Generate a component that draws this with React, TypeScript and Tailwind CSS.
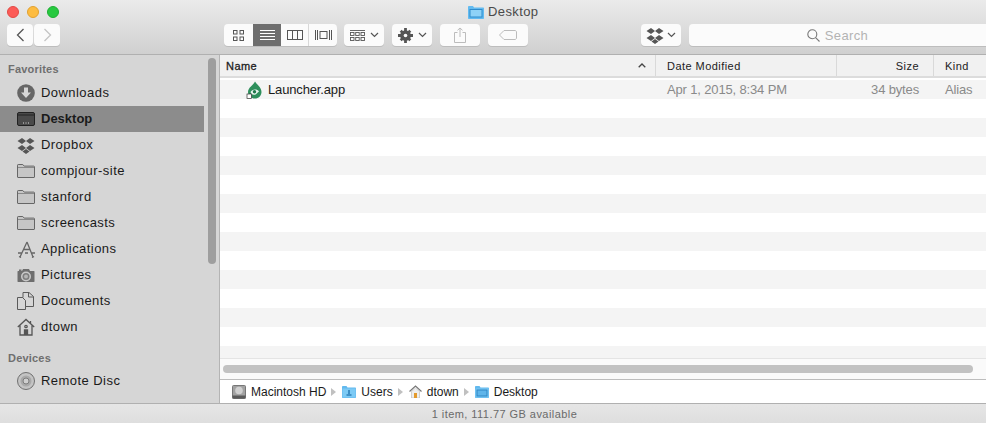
import type { ReactNode } from "react";

const font = "font-['Liberation_Sans',Arial,sans-serif]";

function Chevron() {
  return (
    <svg width="9" height="6" viewBox="0 0 9 6" fill="none" stroke="#555" strokeWidth="1.2">
      <path d="M1 1l3.500 3.500L8 1" />
    </svg>
  );
}

function DropboxIcon({ color = "#555" }: { color?: string }) {
  return (
    <svg width="18" height="17" viewBox="0 0 18 17" fill={color}>
      <path d="M5 1L0.500 4 5 7l4-3zM13 1L9 4l4 3 4.500-3zM5 8L0.500 11 5 14l4-3zM13 8l-4 3 4 3 4.500-3z" />
      <path d="M5.500 14.500L9 12l3.500 2.500L9 17z" />
    </svg>
  );
}

function ToolButton({ className, children }: { className: string; children?: ReactNode }) {
  return (
    <div className={`h-[22px] rounded-[4px] bg-[#fbfbfb] shadow-[0_1px_0_#bdbdbd] flex items-center justify-center ${className}`}>
      {children}
    </div>
  );
}

function FolderIcon() {
  return (
    <svg width="18" height="14" viewBox="0 0 18 14">
      <path d="M0.500 13V1.200C0.500 .8 .8 .5 1.200 .5h4.600l1.400 1.600h9.600c.4 0 .7.3.7.7V13c0 .3-.2.5-.5.5H1c-.3 0-.5-.2-.5-.5z" fill="#c6c6c6" stroke="#666" />
      <path d="M1 3.500h16" stroke="#8a8a8a" />
    </svg>
  );
}

function SideIcon({ name }: { name: string }) {
  if (name === "download") {
    return (
      <svg width="18" height="18" viewBox="0 0 18 18">
        <circle cx="9" cy="9" r="8.800" fill="#666" />
        <path d="M7 3.500h4v5h3L9 14 4 8.500h3z" fill="#d6d6d6" />
      </svg>
    );
  }
  if (name === "desktop") {
    return (
      <svg width="18" height="14" viewBox="0 0 18 14">
        <rect x=".5" y=".5" width="17" height="13" rx="1.500" fill="#4a4a4a" stroke="#222" />
        <path d="M1 3h16" stroke="#222" />
        <path d="M6 11h1M8.500 11h1M11 11h1" stroke="#ddd" />
      </svg>
    );
  }
  if (name === "dropbox") return <DropboxIcon />;
  if (name === "folder") return <FolderIcon />;
  if (name === "apps") {
    return (
      <svg width="19" height="17" viewBox="0 0 19 17" fill="none" stroke="#666" strokeWidth="1.300">
        <path d="M10 1L3 16M10 1l6 15M1 12h4M8 12h3M14 12h4M6.500 8.500h6.500" />
        <path d="M2 15.500l2 1M17 15.500l-2 1" />
      </svg>
    );
  }
  if (name === "camera") {
    return (
      <svg width="18" height="15" viewBox="0 0 18 15">
        <path d="M1 3h1V1.500h2.500V3H5l1-2h6l1 2h4c.3 0 .5.2.5.5v10c0 .3-.2.5-.5.5H1c-.3 0-.5-.2-.5-.5v-10C.5 3.200.7 3 1 3z" fill="#6e6e6e" />
        <circle cx="9" cy="8.500" r="5" fill="#c9c9c9" />
        <circle cx="9" cy="8.500" r="3.500" fill="#7d7d7d" />
        <circle cx="9" cy="8.500" r="2" fill="#b5b5b5" />
      </svg>
    );
  }
  if (name === "docs") {
    return (
      <svg width="17" height="18" viewBox="0 0 17 18" fill="#d6d6d6" stroke="#5a5a5a">
        <path d="M.5 5.500h5l3 3v9h-8z" />
        <path d="M6 .5h6l4.500 4v10h-8V8.500l-3-3H6z" />
        <path d="M11.500 .5v4.500h5" fill="none" />
      </svg>
    );
  }
  if (name === "home") {
    return (
      <svg width="18" height="18" viewBox="0 0 18 18" fill="none" stroke="#555" strokeWidth="1.300">
        <path d="M.8 9L9 1.500 17.200 9M13.500 3v2.500M3 7.500V17h12V7.500" />
        <path d="M7.500 17v-5h3v5" fill="#555" />
        <circle cx="9" cy="8.500" r="1.200" />
      </svg>
    );
  }
  return (
    <svg width="18" height="18" viewBox="0 0 18 18">
      <circle cx="9" cy="9" r="8.500" fill="#c4c4c4" stroke="#707070" />
      <circle cx="9" cy="9" r="5.500" fill="#a9a9a9" />
      <circle cx="9" cy="9" r="3" fill="#cfcfcf" stroke="#7c7c7c" />
    </svg>
  );
}

const favorites = [
  { label: "Downloads", icon: "download" },
  { label: "Desktop", icon: "desktop", selected: true },
  { label: "Dropbox", icon: "dropbox" },
  { label: "compjour-site", icon: "folder" },
  { label: "stanford", icon: "folder" },
  { label: "screencasts", icon: "folder" },
  { label: "Applications", icon: "apps" },
  { label: "Pictures", icon: "camera" },
  { label: "Documents", icon: "docs" },
  { label: "dtown", icon: "home" },
];

function SideRow({ label, icon, selected }: { label: string; icon: string; selected?: boolean }) {
  return (
    <div className={`h-[26px] w-[204px] flex items-center text-[13px] text-[#1a1a1a] ${selected ? "bg-[#8c8c8c] font-bold" : ""}`}>
      <div className="w-[41px] pl-[17px] flex justify-start items-center shrink-0">
        <SideIcon name={icon} />
      </div>
      <span className={selected ? "tracking-[0px]" : "tracking-[0.45px]"}>{label}</span>
    </div>
  );
}

function BlueFolder({ person }: { person?: boolean }) {
  return (
    <svg width="14" height="12" viewBox="0 0 14 12">
      <path d="M0 1c0-.5.4-1 1-1h3.500l1 1.500H13c.6 0 1 .4 1 1V11c0 .6-.4 1-1 1H1c-.6 0-1-.4-1-1z" fill="#62b9ee" />
      <rect x="0.500" y="2.500" width="13" height="9" fill="#7ccaf5" />
      {person ? (
        <path d="M7 4v4M4.500 9h5" stroke="#2c7fb8" strokeWidth="1.600" />
      ) : (
        <rect x="2" y="4" width="10" height="6" fill="#5fb5ea" stroke="#2f86c4" />
      )}
    </svg>
  );
}

function Crumb({ icon, label }: { icon: ReactNode; label: string }) {
  return (
    <div className="flex items-center gap-[5px]">
      {icon}
      <span>{label}</span>
    </div>
  );
}

function Sep() {
  return <span className="w-0 h-0 border-y-[4px] border-y-transparent border-l-[5px] border-l-[#c0c0c0] ml-[5px] mr-[6px]" />;
}

export default function App() {
  return (
    <div className={`w-[986px] h-[423px] flex flex-col overflow-hidden bg-white ${font}`}>
      {/* Toolbar */}
      <div className="h-[55px] shrink-0 bg-gradient-to-b from-[#ebebeb] to-[#d0d0d0] border-b border-[#b0b0b0] flex flex-col">
        <div className="h-[24px] flex items-center">
          <div className="w-[468px] shrink-0 flex items-center gap-[8px] pl-[7px]">
            <span className="w-[12px] h-[12px] rounded-full bg-[#fc5b57] border border-[#e24a45]" />
            <span className="w-[12px] h-[12px] rounded-full bg-[#fdbc40] border border-[#e2a12f]" />
            <span className="w-[12px] h-[12px] rounded-full bg-[#27c940] border border-[#1eae32]" />
          </div>
          <div className="flex items-center gap-[4px] text-[13px] text-[#4a4a4a] tracking-[0.4px]">
            <svg width="16" height="13" viewBox="0 0 16 13">
              <path d="M0 1c0-.5.4-1 1-1h4l1 1.500h9c.6 0 1 .4 1 1V12c0 .6-.4 1-1 1H1c-.6 0-1-.4-1-1z" fill="#63bbf0" />
              <rect x="2" y="3.500" width="12" height="7.500" fill="#8ed2f7" stroke="#2f8ccb" />
            </svg>
            <span>Desktop</span>
          </div>
        </div>
        <div className="flex items-center pl-[7px]">
          <ToolButton className="w-[26px]">
            <svg width="9" height="14" viewBox="0 0 9 14" fill="none" stroke="#555" strokeWidth="1.300"><path d="M7.500 1L1.500 7l6 6" /></svg>
          </ToolButton>
          <ToolButton className="w-[26px] ml-[1px]">
            <svg width="9" height="14" viewBox="0 0 9 14" fill="none" stroke="#c4c4c4" strokeWidth="1.300"><path d="M1.500 1l6 6-6 6" /></svg>
          </ToolButton>

          <div className="ml-[164px] h-[22px] flex rounded-[4px] bg-[#fbfbfb] shadow-[0_1px_0_#bdbdbd] overflow-hidden">
            <div className="w-[29px] flex items-center justify-center">
              <svg width="11" height="11" viewBox="0 0 11 11" fill="none" stroke="#555">
                <rect x=".5" y=".5" width="3.500" height="3.500" /><rect x="7" y=".5" width="3.500" height="3.500" />
                <rect x=".5" y="7" width="3.500" height="3.500" /><rect x="7" y="7" width="3.500" height="3.500" />
              </svg>
            </div>
            <div className="w-[28px] bg-[#6e6e6e] flex items-center justify-center">
              <svg width="15" height="10" viewBox="0 0 15 10" stroke="#fff"><path d="M0 .5h15M0 3.500h15M0 6.500h15M0 9.500h15" /></svg>
            </div>
            <div className="w-[28px] border-r border-[#d8d8d8] flex items-center justify-center">
              <svg width="16" height="10" viewBox="0 0 16 10" fill="none" stroke="#555"><rect x=".5" y=".5" width="15" height="9" /><path d="M5.500 0v10M10.500 0v10" /></svg>
            </div>
            <div className="w-[28px] flex items-center justify-center">
              <svg width="17" height="10" viewBox="0 0 17 10" fill="none" stroke="#555"><rect x="5" y="1.500" width="7" height="7" /><path d="M.5 0v10M2.500 0v10M14.500 0v10M16.500 0v10" /></svg>
            </div>
          </div>

          <ToolButton className="w-[40px] ml-[7px] gap-[5px]">
            <svg width="15" height="11" viewBox="0 0 15 11" fill="none" stroke="#555" strokeWidth=".9">
              <path d="M0 .5h15" /><rect x=".5" y="2.500" width="3.500" height="3" /><rect x="5.700" y="2.500" width="3.500" height="3" /><rect x="11" y="2.500" width="3.500" height="3" />
              <rect x=".5" y="7.500" width="3.500" height="3" /><rect x="5.700" y="7.500" width="3.500" height="3" /><rect x="11" y="7.500" width="3.500" height="3" />
            </svg>
            <Chevron />
          </ToolButton>
          <ToolButton className="w-[40px] ml-[8px] gap-[5px]">
            <svg width="15" height="15" viewBox="0 0 14 14" fill="#555">
              <circle cx="7" cy="7" r="5" />
              <path d="M5.700 0h2.600v3H5.700zM5.700 11h2.600v3H5.700zM0 5.700h3v2.600H0zM11 5.700h3v2.600h-3zM1.600 3.400l1.800-1.800 2 2-1.800 1.800zM8.600 10.400l1.800-1.800 2 2-1.800 1.800zM1.600 10.600l2-2 1.800 1.800-2 2zM8.600 3.600l2-2 1.800 1.800-2 2z" />
              <circle cx="7" cy="7" r="1.700" fill="#fbfbfb" />
            </svg>
            <Chevron />
          </ToolButton>
          <ToolButton className="w-[40px] ml-[8px]">
            <svg width="12" height="16" viewBox="0 0 12 16" fill="none" stroke="#bcbcbc"><path d="M3.500 5.500H.5v10h11v-10h-3M6 10V1M3.500 3.300L6 1l2.500 2.300" /></svg>
          </ToolButton>
          <ToolButton className="w-[40px] ml-[8px]">
            <svg width="18" height="10" viewBox="0 0 18 10" fill="none" stroke="#bcbcbc"><path d="M5 .5h11c.8 0 1.500.7 1.500 1.500v6c0 .8-.7 1.500-1.500 1.500H5L.5 5z" /></svg>
          </ToolButton>

          <ToolButton className="w-[40px] ml-[113px] gap-[3px]">
            <DropboxIcon />
            <Chevron />
          </ToolButton>
          <ToolButton className="flex-1 ml-[8px] rounded-r-none gap-[5px] text-[13px] text-[#b3b3b3] tracking-[0.35px]">
            <svg width="13" height="13" viewBox="0 0 13 13" fill="none" stroke="#777" strokeWidth="1.100"><circle cx="5.300" cy="5.300" r="4.500" /><path d="M8.600 8.600L12.500 12.500" /></svg>
            <span className="pt-[1px]">Search</span>
          </ToolButton>
        </div>
      </div>

      <div className="flex flex-1 min-h-0">
        {/* Sidebar */}
        <div className="relative w-[220px] shrink-0 bg-[#d6d6d6] border-r border-[#b4b4b4] flex flex-col overflow-hidden">
          <div className="h-[25px] flex items-end pl-[8px] pb-[3px] text-[11px] font-bold text-[#6f6f6f] tracking-[0.2px] shrink-0">Favorites</div>
          {favorites.map((f) => (
            <SideRow key={f.label} label={f.label} icon={f.icon} selected={f.selected} />
          ))}
          <div className="h-[28px] flex items-center pl-[8px] pt-[9px] text-[11px] font-bold text-[#6f6f6f] tracking-[0.2px] shrink-0">Devices</div>
          <SideRow label="Remote Disc" icon="disc" />
          <div className="absolute left-[208px] top-[3px] w-[8px] h-[206px] rounded-full bg-[#9e9e9e]" />
        </div>

        {/* File list */}
        <div className="flex-1 min-w-0 flex flex-col">
          <div className="h-[23px] shrink-0 bg-[#f1f1f1] border-b-2 border-[#dcdcdc] grid grid-cols-[436px_181px_97px_1fr] items-center text-[11px] text-[#222] tracking-[0.45px]">
            <div className="h-full flex items-center justify-between pl-[6px] pr-[9px] border-r border-[#d9d9d9]">
              <span className="pt-[1px] [-webkit-text-stroke:0.3px_#222]">Name</span>
              <svg width="8" height="5" viewBox="0 0 8 5" fill="none" stroke="#444" strokeWidth="1.300"><path d="M.7 4.300L4 1l3.300 3.300" /></svg>
            </div>
            <div className="h-full flex items-center pl-[11px] pt-[1px] border-r border-[#d9d9d9]">Date Modified</div>
            <div className="h-full flex items-center justify-end pr-[14px] pt-[1px] border-r border-[#d9d9d9]">Size</div>
            <div className="pl-[11px] pt-[1px]">Kind</div>
          </div>
          <div className="flex-1 min-h-0 overflow-hidden relative">
            <div className="h-[2px] bg-white" />
            <div className="h-[19px] bg-[#f4f4f4] grid grid-cols-[436px_181px_97px_1fr] items-center text-[13px] tracking-[-0.15px]">
              <div className="flex items-center pl-[26px] gap-[5px] text-[#1a1a1a]">
                <svg width="17" height="18" viewBox="0 0 17 18">
                  <path d="M9 .5C10.500 3.500 15.500 6 15.500 11c0 3.800-3 6.500-6.500 6.500-4 0-7-2.700-7-6.500C2 6.500 7.500 4 9 .5z" fill="#2e8f5c" />
                  <path d="M4.500 11c1.500-3 6.500-3.500 8.500-.5-2 1-2.500 3.500-5 3.300-2 0-3-1.300-3.500-2.800z" fill="#e9f5ee" />
                  <circle cx="8.500" cy="10.700" r="1.700" fill="#1f7a4c" />
                  <rect x="1" y="13" width="4.500" height="4.500" fill="#fff" stroke="#333" strokeWidth=".7" />
                </svg>
                <span>Launcher.app</span>
              </div>
              <div className="pl-[11px] text-[#8a8a8a]">Apr 1, 2015, 8:34 PM</div>
              <div className="text-right pr-[15px] text-[#8a8a8a]">34 bytes</div>
              <div className="pl-[11px] text-[#8a8a8a]">Alias</div>
            </div>
            {Array.from({ length: 14 }).map((_, i) => (
              <div key={i} className={`h-[19px] ${i % 2 === 0 ? "bg-white" : "bg-[#f4f4f4]"}`} />
            ))}
            <div className="absolute left-0 right-0 bottom-0 h-[21px] bg-[#fafafa] border-t border-[#e4e4e4] flex items-center px-[3px]">
              <div className="h-[8px] w-[750px] rounded-full bg-[#c2c2c2]" />
            </div>
          </div>
          <div className="h-[24px] shrink-0 bg-white border-t border-[#bdbdbd] flex items-center pl-[12px] text-[12px] text-[#1a1a1a]">
            <Crumb
              label="Macintosh HD"
              icon={
                <svg width="14" height="14" viewBox="0 0 14 14">
                  <rect x="0.500" y="0.500" width="13" height="13" rx="1" fill="#a2a2a2" stroke="#777" />
                  <circle cx="7" cy="5.500" r="3.800" fill="#d0d0d0" />
                  <rect x="0.500" y="10.500" width="13" height="3" fill="#5a5a5a" />
                </svg>
              }
            />
            <Sep />
            <Crumb label="Users" icon={<BlueFolder person />} />
            <Sep />
            <Crumb
              label="dtown"
              icon={
                <svg width="13" height="13" viewBox="0 0 13 13">
                  <path d="M.5 6.500L6.500 1l6 5.500" fill="none" stroke="#777" strokeWidth="1.200" />
                  <path d="M2.500 6.500L6.500 3l4 3.500V13h-8z" fill="#eee" stroke="#aaa" strokeWidth=".5" />
                  <rect x="5" y="8" width="3" height="5" fill="#e39a2d" />
                </svg>
              }
            />
            <Sep />
            <Crumb label="Desktop" icon={<BlueFolder />} />
          </div>
        </div>
      </div>

      {/* Status bar */}
      <div className="h-[20px] shrink-0 bg-gradient-to-b from-[#e6e6e6] to-[#dedede] border-t border-[#b0b0b0] flex items-center justify-center pl-[23px] pt-[1px] text-[11px] text-[#6a6a6a] tracking-[0.45px]">
        1 item, 111.77 GB available
      </div>
    </div>
  );
}
